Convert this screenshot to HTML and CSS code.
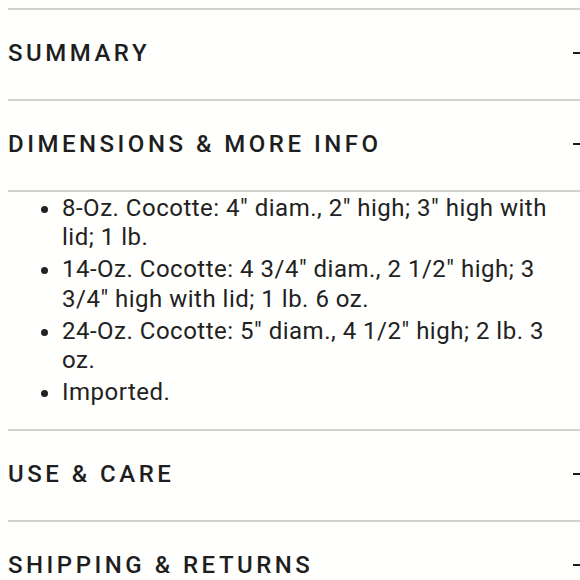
FILE: index.html
```html
<!DOCTYPE html>
<html lang="en">
<head>
<meta charset="utf-8">
<link rel="stylesheet" href="styles.css">
</head>
<body>
<div class="accordion">
  <div class="row"><span class="title">SUMMARY</span><span class="dash"></span></div>
  <div class="row"><span class="title">DIMENSIONS &amp; MORE INFO</span><span class="dash"></span></div>
  <div class="panel">
    <ul class="list">
      <li>8-Oz. Cocotte: 4" diam., 2" high; 3" high with lid; 1 lb.</li>
      <li>14-Oz. Cocotte: 4 3/4" diam., 2 1/2" high; 3 3/4" high with lid; 1 lb. 6 oz.</li>
      <li>24-Oz. Cocotte: 5" diam., 4 1/2" high; 2 lb. 3 oz.</li>
      <li>Imported.</li>
    </ul>
  </div>
  <div class="row"><span class="title">USE &amp; CARE</span><span class="dash"></span></div>
  <div class="row"><span class="title">SHIPPING &amp; RETURNS</span><span class="dash"></span></div>
</div>
</body>
</html>
```
FILE: styles.css
```css
html {
  overflow: hidden;
  background: #fffffd;
}
body {
  margin: 8px 0 0 8px;
  font-family: Roboto, "Liberation Sans", sans-serif;
  color: #222222;
}
.accordion {
  width: 575px;
}
.row {
  display: flex;
  align-items: center;
  justify-content: space-between;
  border-top: 2px solid #d2d2d0;
  height: 86px;
  padding-bottom: 3px;
}
.title {
  font-size: 24px;
  font-weight: 500;
  letter-spacing: 3.5px;
  line-height: 28px;
  color: #1e1e1e;
}
.dash {
  flex: none;
  width: 10px;
  height: 2px;
  background: #1a1a1a;
}
.panel {
  border-top: 2px solid #d2d2d0;
  padding: 2px 12px 22px 0;
}
.list {
  margin: 0;
  padding-left: 54px;
  font-size: 24px;
  line-height: 29.2px;
  letter-spacing: 0.5px;
}
.list li {
  margin-top: 3px;
}
.list li:first-child {
  margin-top: 0;
}
```
